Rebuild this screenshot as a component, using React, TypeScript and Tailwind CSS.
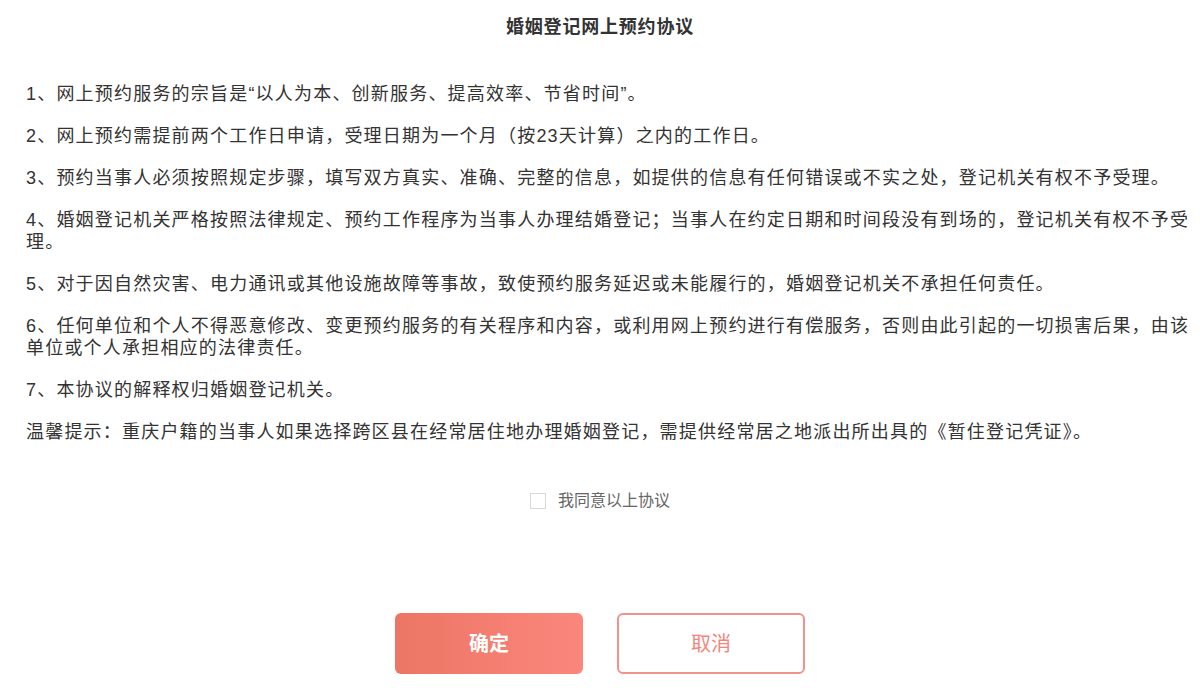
import React from "react";

const paras = [
  "1、网上预约服务的宗旨是“以人为本、创新服务、提高效率、节省时间”。",
  "2、网上预约需提前两个工作日申请，受理日期为一个月（按23天计算）之内的工作日。",
  "3、预约当事人必须按照规定步骤，填写双方真实、准确、完整的信息，如提供的信息有任何错误或不实之处，登记机关有权不予受理。",
  "4、婚姻登记机关严格按照法律规定、预约工作程序为当事人办理结婚登记；当事人在约定日期和时间段没有到场的，登记机关有权不予受理。",
  "5、对于因自然灾害、电力通讯或其他设施故障等事故，致使预约服务延迟或未能履行的，婚姻登记机关不承担任何责任。",
  "6、任何单位和个人不得恶意修改、变更预约服务的有关程序和内容，或利用网上预约进行有偿服务，否则由此引起的一切损害后果，由该单位或个人承担相应的法律责任。",
  "7、本协议的解释权归婚姻登记机关。",
  "温馨提示：重庆户籍的当事人如果选择跨区县在经常居住地办理婚姻登记，需提供经常居之地派出所出具的《暂住登记凭证》。",
];

export default function App() {
  return (
    <div
      className="w-[1200px] h-[690px] bg-white text-[#333] overflow-hidden"
      style={{ fontFamily: '"Liberation Sans", "Noto Sans CJK SC", sans-serif' }}
    >
      <h1 className="pt-[15px] text-center text-[18px] leading-[24px] tracking-[0.8px] font-bold text-[#333]">
        婚姻登记网上预约协议
      </h1>
      <div className="pl-[26px] w-[1190px] pt-[44px] flex flex-col gap-[20px]">
        {paras.map((p, i) => (
          <p key={i} className="text-[18px] leading-[22px] tracking-[1.2px] text-[#333]">
            {p}
          </p>
        ))}
      </div>
      <div className="mt-[48px] flex items-center justify-center gap-[12px]">
        <span className="w-[16px] h-[16px] border border-[#d9d9d9] bg-white" />
        <span className="text-[16px] leading-[20px] text-[#666]">我同意以上协议</span>
      </div>
      <div className="mt-[102px] flex justify-center gap-[34px]">
        <button className="w-[188px] h-[61px] rounded-[6px] bg-gradient-to-r from-[#ec7664] to-[#fb867c] text-white text-[20px] font-bold">
          确定
        </button>
        <button className="w-[188px] h-[61px] rounded-[6px] border-2 border-[#f3918a] bg-white text-[#f2857c] text-[20px]">
          取消
        </button>
      </div>
    </div>
  );
}
